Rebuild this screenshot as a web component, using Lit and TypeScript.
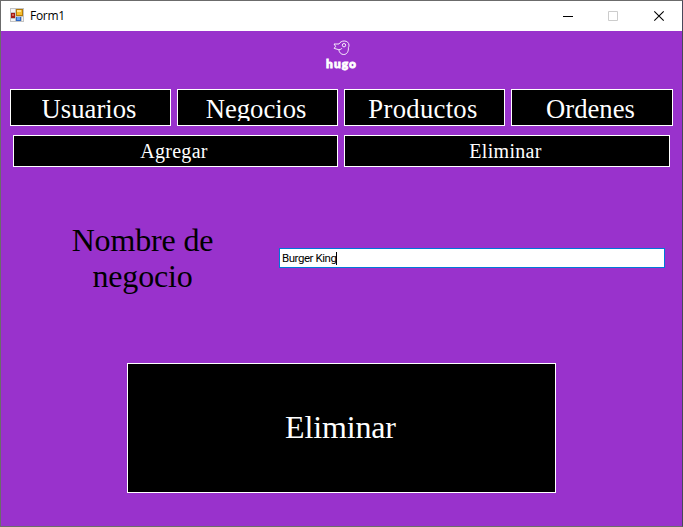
import { LitElement, html, css } from "lit";
import { customElement } from "lit/decorators.js";

@customElement("app-root")
export class AppRoot extends LitElement {
  static styles = css`
    * { box-sizing: border-box; }
    :host {
      display: block;
      width: 683px;
      height: 527px;
      overflow: hidden;
      font-family: "Liberation Serif", "Times New Roman", serif;
    }
    .window {
      display: flex;
      flex-direction: column;
      width: 683px;
      height: 527px;
      border: 1px solid #6b6b6b;
      border-right-color: #49485a;
      background: #9932cc;
    }
    .titlebar {
      display: flex;
      align-items: center;
      flex: none;
      height: 30px;
      padding-left: 9px;
      background: #fff;
      color: #000;
      font: 12px/16px "Open Sans", "Noto Sans", sans-serif;
    }
    .appicon { display: block; margin: 0 6px 2px 0; }
    .title { flex: 1; letter-spacing: -0.3px; }
    .controls { display: flex; margin-right: -1px; }
    .control { display: block; width: 46px; height: 29px; flex: none; }
    .logo {
      display: flex;
      flex-direction: column;
      align-items: center;
      flex: none;
      height: 58px;
      padding-top: 9px;
      color: #fff;
    }
    .bird { display: block; }
    .brand {
      margin-top: 1px;
      font: 900 12px/14px Lato, sans-serif;
      letter-spacing: 1px;
      -webkit-text-stroke: 0.8px #fff;
    }
    .cell {
      display: flex;
      align-items: center;
      justify-content: center;
      border: 1px solid #fff;
      background: #000;
      color: #fff;
    }
    .nav {
      display: grid;
      grid-template-columns: 161px 161px 161px 162px;
      gap: 6px;
      padding-left: 9px;
      flex: none;
    }
    .nav .cell { height: 37px; font-size: 26.67px; padding: 4px 3px 4px 0; }
    .nav .text { height: 27px; line-height: 31px; overflow: hidden; }
    .nav .cell:nth-child(3) { letter-spacing: 0.3px; }
    .sub {
      display: grid;
      grid-template-columns: 325px 326px;
      gap: 6px;
      margin-top: 9px;
      padding-left: 12px;
      flex: none;
    }
    .sub .cell { height: 32px; font-size: 20px; letter-spacing: 0.3px; padding-right: 3px; }
    .row {
      display: flex;
      align-items: flex-start;
      flex: none;
      margin-top: 55px;
      padding-left: 12px;
    }
    .label {
      width: 259px;
      text-align: center;
      font-size: 32px;
      line-height: 36px;
      letter-spacing: -0.15px;
      color: #000;
    }
    .field {
      display: flex;
      align-items: center;
      width: 386px;
      height: 20px;
      margin: 26px 0 0 7px;
      padding: 0 0 0 2px;
      border: 1px solid #0078d7;
      background: #fff;
      font: 11.5px/14px Roboto, sans-serif;
      letter-spacing: -0.45px;
      color: #000;
    }
    .caret { width: 1px; height: 13px; background: #000; }
    .action {
      flex: none;
      width: 429px;
      height: 130px;
      margin: 69px 0 0 126px;
      padding: 0 2px 2px 0;
      font-size: 32px;
      letter-spacing: -0.15px;
    }
  `;

  render() {
    return html`
      <div class="window">
        <div class="titlebar">
          <svg class="appicon" width="14" height="14" viewBox="0 0 14 14">
            <path fill="#c3c3c3" d="M0 0h14v14H0z" />
            <path fill="#f4f4f4" d="M1 1h4v3H1zM1 11h4v2H1zM12 9h1v4h-1z" />
            <path fill="#a31b14" d="M1 5h4v5H1z" />
            <path fill="#d76255" d="M2 6h2v2H2z" />
            <path fill="#b57a08" d="M6 1h7v7H6z" />
            <path fill="#f6bd2c" d="M7 2h5v5H7z" />
            <path fill="#ffe28a" d="M7 2h4v2H7z" />
            <path fill="#2e66c4" d="M6 9h5v4H6z" />
            <path fill="#69a1ef" d="M7 9h3v3H7z" />
          </svg>
          <span class="title">Form1</span>
          <div class="controls">
            <svg class="control" viewBox="0 0 46 29"><path fill="#000" d="M18 14h10v1H18z" /></svg>
            <svg class="control" viewBox="0 0 46 29"><path fill="none" stroke="#ccc" d="M17.500 9.500h9v9h-9z" /></svg>
            <svg class="control" viewBox="0 0 46 29"><path fill="none" stroke="#000" stroke-width="1.100" d="M17.300 9.300l9.400 9.400M26.700 9.300l-9.400 9.400" /></svg>
          </div>
        </div>
        <div class="logo">
          <svg class="bird" width="18" height="16" viewBox="0 0 18 16" fill="none" stroke="#fff" stroke-width="0.900">
            <path d="M6 4C7 2 9 1 11.300 1c2.700 0 4.700 1.800 4.700 4.200 0 .9-.2 1.600-.6 2.300.3 3.800-1.400 7-4.600 7-2.800 0-4.500-1.800-5-4.800" />
            <path d="M6 4L1 4l1.600 2.300L1.200 8.400l4.600 1.300C8 9.600 8.700 8.700 8.900 8" />
            <circle cx="11" cy="5.200" r="1.700" />
          </svg>
          <span class="brand">hugo</span>
        </div>
        <div class="nav">
          ${["Usuarios", "Negocios", "Productos", "Ordenes"].map(
            (t) => html`<div class="cell"><span class="text">${t}</span></div>`
          )}
        </div>
        <div class="sub">
          ${["Agregar", "Eliminar"].map((t) => html`<div class="cell">${t}</div>`)}
        </div>
        <div class="row">
          <div class="label">Nombre de<br />negocio</div>
          <div class="field">Burger King<span class="caret"></span></div>
        </div>
        <div class="cell action">Eliminar</div>
      </div>
    `;
  }
}
